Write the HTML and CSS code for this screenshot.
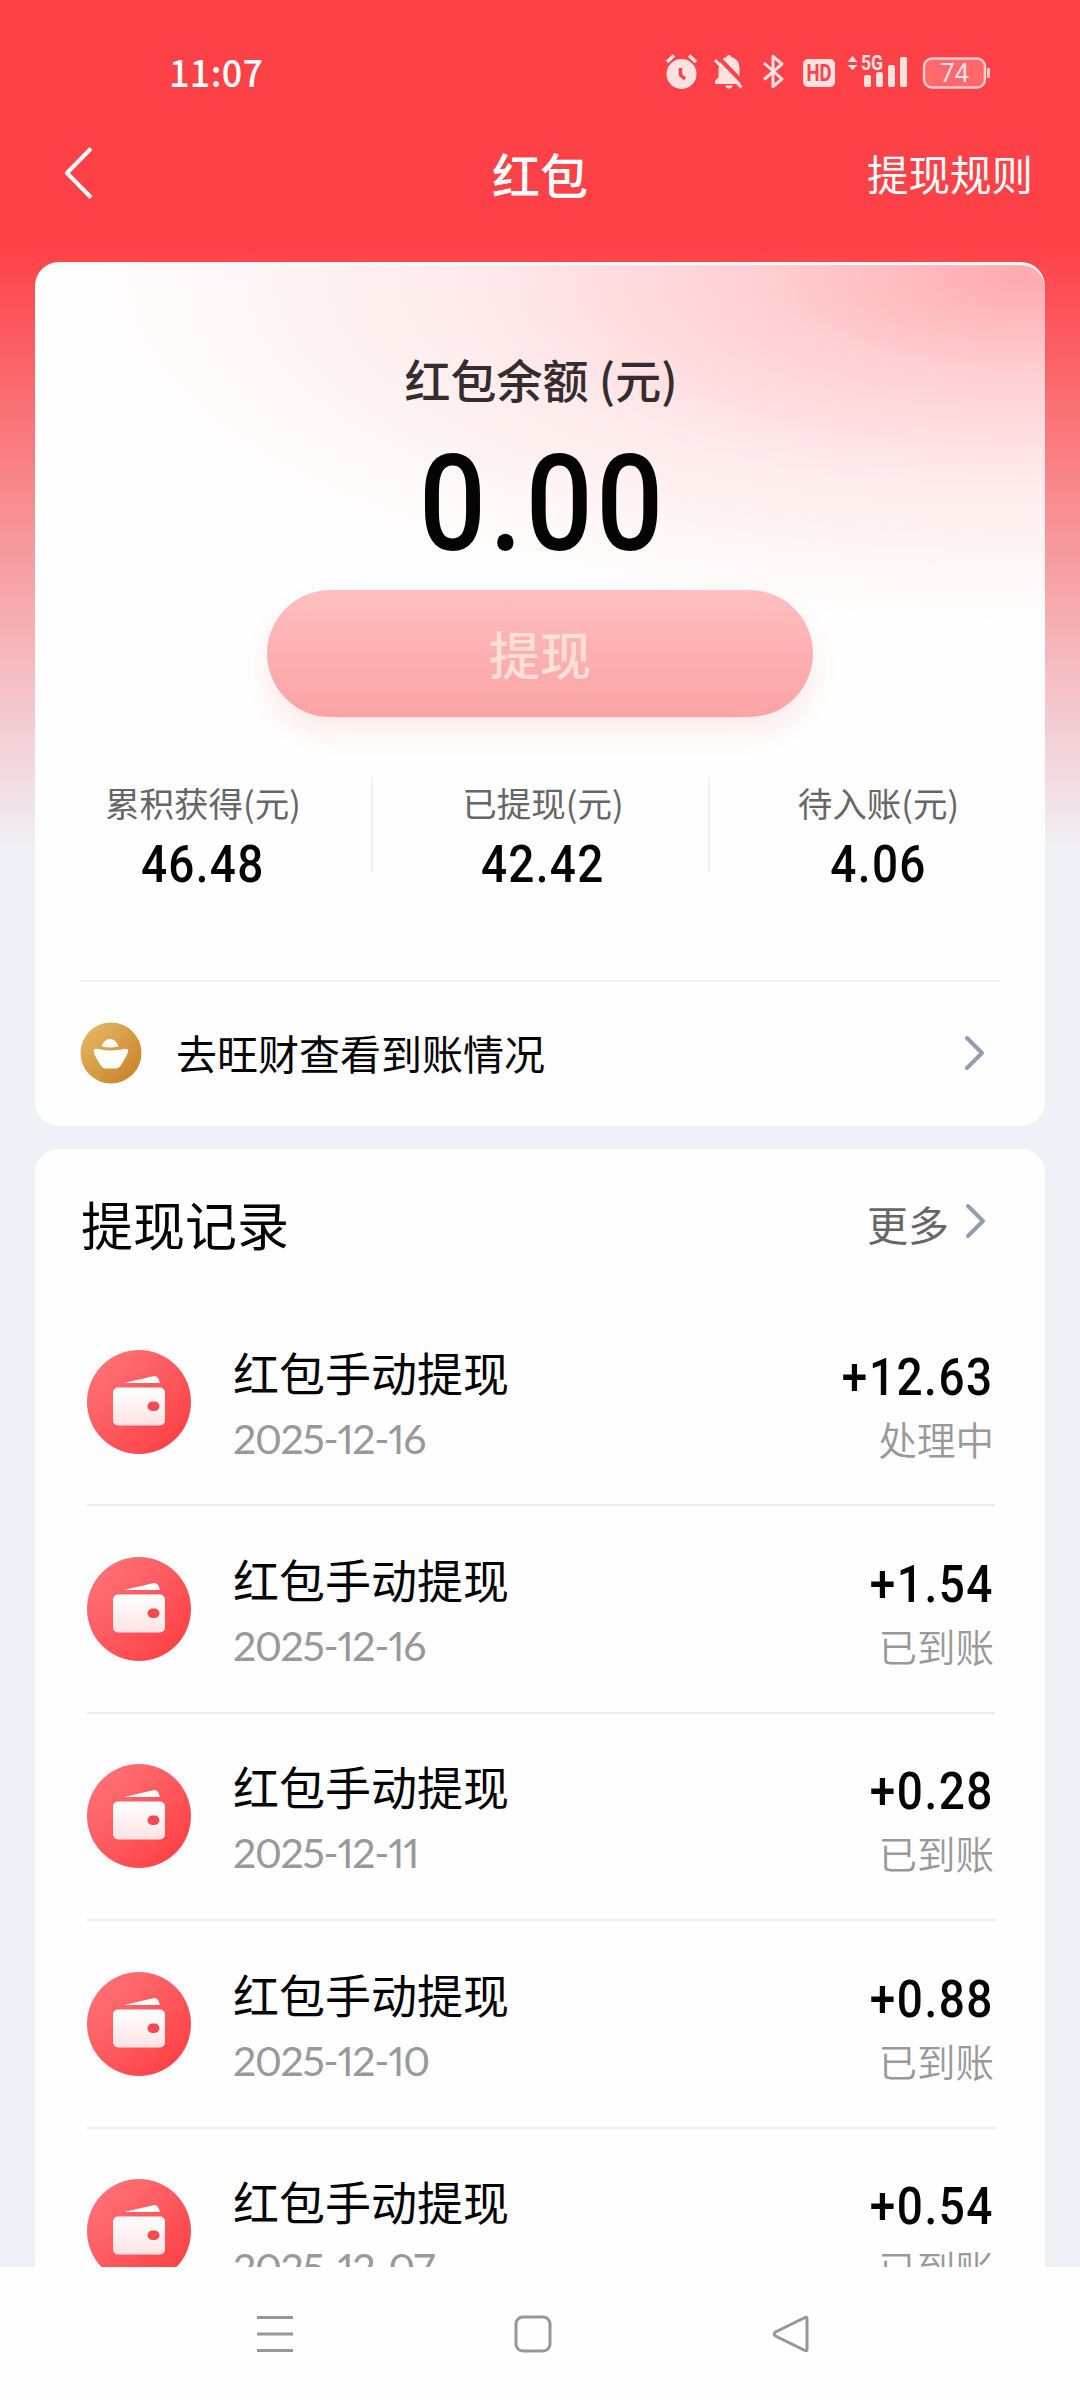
FILE: index.html
```
<!DOCTYPE html>
<html lang="zh-CN">
<head>
<meta charset="utf-8">
<title>红包</title>
<link rel="stylesheet" href="styles.css">
</head>
<body>
<svg width="0" height="0" class="defs">
  <defs>
    <linearGradient id="red" x1="0" y1="0" x2="1" y2="1"><stop offset=".1" stop-color="#ff7276"/><stop offset=".9" stop-color="#ff4045"/></linearGradient>
    <linearGradient id="pale" x1="0" y1="0" x2="0" y2="1"><stop offset="0" stop-color="#fff"/><stop offset="1" stop-color="#ffe3e4"/></linearGradient>
    <linearGradient id="gold" x1="0" y1="0" x2="1" y2="1"><stop offset=".1" stop-color="#e5b560"/><stop offset=".9" stop-color="#c8842c"/></linearGradient>
  </defs>
  <symbol id="wallet" viewBox="0 0 104 104">
    <circle cx="52" cy="52" r="52" fill="url(#red)"/>
    <path d="M37 33 L66 26.2 Q70 25.5 71.5 29 L73 33 Z" fill="#fff"/>
    <rect x="26" y="37.500" width="52" height="38" rx="5" fill="url(#pale)"/>
    <rect x="60.500" y="51.500" width="12" height="9.500" rx="4.700" fill="#f74a50"/>
  </symbol>
  <symbol id="chev" viewBox="0 0 22 36">
    <path d="M3 3 L18 18 L3 33" fill="none" stroke="#929db0" stroke-width="4" stroke-linecap="round" stroke-linejoin="round"/>
  </symbol>
</svg>
<div class="screen">
  <div class="status">
    <span class="time">11:07</span>
    <svg class="tray" width="330" height="44" viewBox="0 0 330 44" fill="#ffe1e2" stroke="none">
      <circle cx="16.500" cy="24" r="15"/>
      <path d="M2 12 L9 5.500 M24 5.500 L31 12" stroke="#ffe1e2" stroke-width="3.500" fill="none"/>
      <path d="M15.500 18 V25 L20 29" stroke="#fe4247" stroke-width="3.500" fill="none"/>
      <path d="M50 34 V31 L53.500 27 V19 Q54.500 8.500 61.500 7 Q62 5 64 5 Q66 5 66.500 7 Q74 9 74.500 18 V27 L79 32 V34 Z M60 35.500 H68 Q66.500 38.500 64 38.500 Q61.500 38.500 60 35.500 Z"/>
      <path d="M53 7 L81 36" stroke="#fe4247" stroke-width="4" fill="none"/>
      <path d="M50 10 L76.500 37.500" stroke="#ffe1e2" stroke-width="3" fill="none"/>
      <path d="M99 13 L117 29 L108 36.500 V6.500 L117 14 L99 29.500" stroke="#ffe1e2" stroke-width="3" fill="none" stroke-linejoin="round"/>
      <rect x="138" y="9" width="32" height="28" rx="5"/>
      <text x="154" y="30.500" class="hd" textLength="25" lengthAdjust="spacingAndGlyphs">HD</text>
      <path d="M182.500 12 L187.500 6 L192.500 12 Z M182.500 15 L187.500 20 L192.500 15 Z"/>
      <text x="196" y="20" class="fiveg" textLength="22" lengthAdjust="spacingAndGlyphs">5G</text>
      <rect x="199" y="25" width="7" height="12" rx="2"/><rect x="211" y="22" width="7" height="15" rx="2"/>
      <rect x="223" y="15" width="7" height="22" rx="2"/><rect x="235" y="7" width="7" height="30" rx="2"/>
      <rect x="259" y="8.500" width="61" height="29" rx="8" fill="#ff686c" stroke="#ffc9cb" stroke-width="2.500"/>
      <path d="M323.500 18 V28" stroke="#ffc9cb" stroke-width="3" fill="none"/>
      <text x="289.500" y="31.500" class="batt">74</text>
    </svg>
  </div>
  <header class="bar">
    <svg class="back" width="30" height="54" viewBox="0 0 30 54"><path d="M27 2.500 L3 27 L27 51.500" fill="none" stroke="#fff" stroke-width="4" stroke-linejoin="round"/></svg>
    <h1>红包</h1>
    <span class="rules">提现规则</span>
  </header>

  <section class="card balance">
    <div class="label">红包余额 (元)</div>
    <div class="amount num">0.00</div>
    <div class="btn">提现</div>
    <div class="stats">
      <div class="stat"><span>累积获得(元)</span><b class="num">46.48</b></div>
      <div class="stat mid"><span>已提现(元)</span><b class="num">42.42</b></div>
      <div class="stat last"><span>待入账(元)</span><b class="num">4.06</b></div>
    </div>
    <div class="goto">
      <svg width="62" height="62" viewBox="0 0 62 62"><circle cx="31" cy="31" r="30.500" fill="url(#gold)"/><path d="M21.500 24.500 Q24 17 30 17 Q36 17 38.500 24.500 Q30 26.500 21.500 24.500 Z" fill="#fff"/><path d="M14 27.500 Q16 26 21 27.500 Q31 29.500 41 27.500 Q46 26 48 27.500 Q49.500 30 41 43 Q39 46.500 35.500 46.500 H26 Q22.500 46.500 20.500 43 Q12 30 14 27.500 Z" fill="#fff"/></svg>
      <span>去旺财查看到账情况</span>
      <svg class="chev" width="22" height="36"><use href="#chev"/></svg>
    </div>
  </section>

  <section class="card records">
    <div class="head"><h2>提现记录</h2><span>更多</span><svg class="chev" width="22" height="36"><use href="#chev"/></svg></div>
    <div class="row"><svg class="ico"><use href="#wallet"/></svg><div class="what"><p>红包手动提现</p><time>2025-12-16</time></div><div class="sum"><b class="num">+12.63</b><em>处理中</em></div></div>
    <div class="row"><svg class="ico"><use href="#wallet"/></svg><div class="what"><p>红包手动提现</p><time>2025-12-16</time></div><div class="sum"><b class="num">+1.54</b><em>已到账</em></div></div>
    <div class="row"><svg class="ico"><use href="#wallet"/></svg><div class="what"><p>红包手动提现</p><time>2025-12-11</time></div><div class="sum"><b class="num">+0.28</b><em>已到账</em></div></div>
    <div class="row"><svg class="ico"><use href="#wallet"/></svg><div class="what"><p>红包手动提现</p><time>2025-12-10</time></div><div class="sum"><b class="num">+0.88</b><em>已到账</em></div></div>
    <div class="row"><svg class="ico"><use href="#wallet"/></svg><div class="what"><p>红包手动提现</p><time>2025-12-07</time></div><div class="sum"><b class="num">+0.54</b><em>已到账</em></div></div>
  </section>
</div>
<nav class="nav">
  <svg width="38" height="38" viewBox="0 0 38 38"><path d="M1 2.500 H37 M1 19 H37 M1 35.500 H37"/></svg>
  <svg width="38" height="38" viewBox="0 0 38 38"><rect x="2" y="2" width="34" height="34" rx="7"/></svg>
  <svg width="38" height="38" viewBox="0 0 38 38"><path d="M35 3.500 Q35 1.500 33 2.500 L3.500 17 Q1 19 3.500 21 L33 35.500 Q35 36.500 35 34.500 Z"/></svg>
</nav>
</body>
</html>
```
FILE: styles.css
```
* { box-sizing: border-box; margin: 0; padding: 0; }
body {
  width: 1080px; height: 2400px; overflow: hidden;
  display: flex; flex-direction: column;
  font-family: "Noto Sans CJK SC", sans-serif; color: #050505; background: #fefefe;
}
.defs { position: absolute; }
.screen {
  height: 2267px; overflow: hidden; display: flex; flex-direction: column; flex-shrink: 0;
  padding: 0 35px;
  background: linear-gradient(180deg, #fe4146 0, #fe4146 245px, #f0f1f6 850px);
}
svg { flex-shrink: 0; display: block; }
.num { font-family: Roboto, sans-serif; font-weight: 500; transform: scaleX(.9); }

.status { height: 110px; padding: 50px 54px 0 134px; display: flex; justify-content: space-between; flex-shrink: 0; }
.time { color: #fff; font-size: 36px; font-weight: 500; line-height: 44px; letter-spacing: .3px; margin-top: -1px; }
.tray { margin-right: -4px; }
.hd { font: 700 23px Roboto, sans-serif; fill: #fe4247; text-anchor: middle; }
.fiveg { font: 700 20px Roboto, sans-serif; }
.batt { font: 400 26px Roboto, sans-serif; text-anchor: middle; }

.bar { height: 152px; display: grid; grid-template-columns: 1fr auto 1fr; align-items: center; flex-shrink: 0; padding: 0 12px 27px 29px; color: #fff; }
.bar h1 { font-size: 48px; font-weight: 500; line-height: 60px; margin-right: 17px; }
.rules { justify-self: end; font-size: 41.5px; line-height: 60px; }

.card { background-color: #fefefe; border-radius: 24px; flex-shrink: 0; }
.balance {
  height: 864px; display: flex; flex-direction: column; align-items: center;
  box-shadow: inset 0 3px 1px #fff8f8;
  background-image: radial-gradient(ellipse 940px 345px at 990px 16px, #ffaaaf 0, #ffcfd2 28%, #ffebec 60%, #fefefe00 100%);
}
.label { margin-top: 81px; font-size: 46px; font-weight: 500; line-height: 70px; color: #362c2d; padding-left: 2px; }
.amount { font-size: 134px; line-height: 160px; height: 177px; padding-top: 12px; letter-spacing: 4px; margin-right: -5px; transform: scaleX(.88); }
.btn {
  width: 546px; height: 127px; border-radius: 64px; display: flex; align-items: center; justify-content: center;
  font-size: 51px; font-weight: 500; color: #fde0d2; padding-bottom: 2px;
  background: linear-gradient(180deg, #fdbfc1, #fcb0b2 50%, #fba3a4);
  box-shadow: 0 14px 28px #fde8e8;
}
.stats { width: 100%; margin-top: 60px; display: grid; grid-template-columns: 336px 1fr 335px; height: 203px; }
.stat { height: 95px; display: flex; flex-direction: column; align-items: center; padding-top: 4px; }
.stat.mid { padding-left: 5px; border: solid #f1f1f1; border-width: 0 2px; }
.stat.last { padding-left: 2px; }
.stat span { font-size: 34.500px; line-height: 42px; color: #666; }
.stat b { font-size: 51px; line-height: 60px; margin-top: 12px; letter-spacing: 1.5px; }
.goto { width: 920px; height: 143px; border-top: 2px solid #f2f2f2; display: flex; align-items: center; }
.goto span { margin-left: 34px; font-size: 41px; line-height: 60px; flex: 1; padding-bottom: 2px; }
.goto .chev { margin-right: 14px; }

.records { margin-top: 23px; padding: 0 50px 0 52px; }
.head { height: 150px; display: flex; align-items: center; padding-right: 8px; margin-left: -6px; }
.head h2 { font-size: 52px; font-weight: 400; flex: 1; padding-bottom: 2px; }
.head span { font-size: 41px; color: #666; margin-right: 16px; padding-bottom: 2px; }
.head .chev { position: relative; top: -3px; }
.row { height: 207.400px; display: flex; align-items: center; border-bottom: 2px solid #ebebeb; }
.ico { width: 104px; height: 104px; }
.what { margin-left: 42px; flex: 1; }
.what p { font-size: 46px; line-height: 66px; }
.what time { display: block; font: 400 41px/60px Lato, sans-serif; font-variant-numeric: proportional-nums; letter-spacing: -1.3px; color: #999; padding-top: 5px; margin-bottom: -3px; }
.sum { display: flex; flex-direction: column; align-items: flex-end; }
.sum b { font-size: 51px; line-height: 66px; letter-spacing: 1.7px; transform-origin: 100% 50%; padding-top: 9px; margin-right: 1px; }
.sum em { font-style: normal; font-size: 38.500px; line-height: 60px; color: #999; font-weight: 350; margin: -3px 1px 0 0; }

.nav { height: 133px; flex-shrink: 0; padding: 48px 270px 0 256px; display: flex; justify-content: space-between; }
.nav svg { fill: none; stroke: #979797; stroke-width: 3; }
```
